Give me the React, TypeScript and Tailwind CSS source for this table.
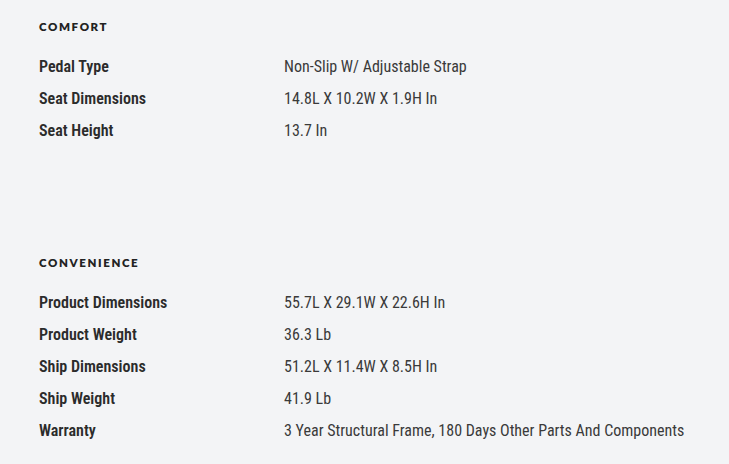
const sections = [
  {
    title: "Comfort",
    rows: [
      ["Pedal Type", "Non-Slip W/ Adjustable Strap"],
      ["Seat Dimensions", "14.8L X 10.2W X 1.9H In"],
      ["Seat Height", "13.7 In"],
    ],
  },
  {
    title: "Convenience",
    rows: [
      ["Product Dimensions", "55.7L X 29.1W X 22.6H In"],
      ["Product Weight", "36.3 Lb"],
      ["Ship Dimensions", "51.2L X 11.4W X 8.5H In"],
      ["Ship Weight", "41.9 Lb"],
      ["Warranty", "3 Year Structural Frame, 180 Days Other Parts And Components"],
    ],
  },
];

export default function App() {
  return (
    <div className="min-h-[464px] w-[729px] bg-[#f3f4f6] px-[39px] pt-[19px] text-[#2f2f2f]">
      {sections.map((section, i) => (
        <section key={section.title} className={i > 0 ? "mt-[108px]" : ""}>
          <h3 className="font-['Lato','Liberation_Sans',sans-serif] text-[11.5px] font-extrabold uppercase leading-[16px] tracking-[0.14em] text-[#222]">
            {section.title}
          </h3>
          <dl className="mt-[16px] font-['Roboto','Liberation_Sans',sans-serif] [font-stretch:condensed]">
            {section.rows.map(([label, value]) => (
              <div key={label} className="grid h-[32px] grid-cols-[245px_1fr] items-center">
                <dt className="text-[16px] font-semibold text-[#2b2b2b]">{label}</dt>
                <dd className="text-[16px] text-[#3a3a3a]">{value}</dd>
              </div>
            ))}
          </dl>
        </section>
      ))}
    </div>
  );
}
